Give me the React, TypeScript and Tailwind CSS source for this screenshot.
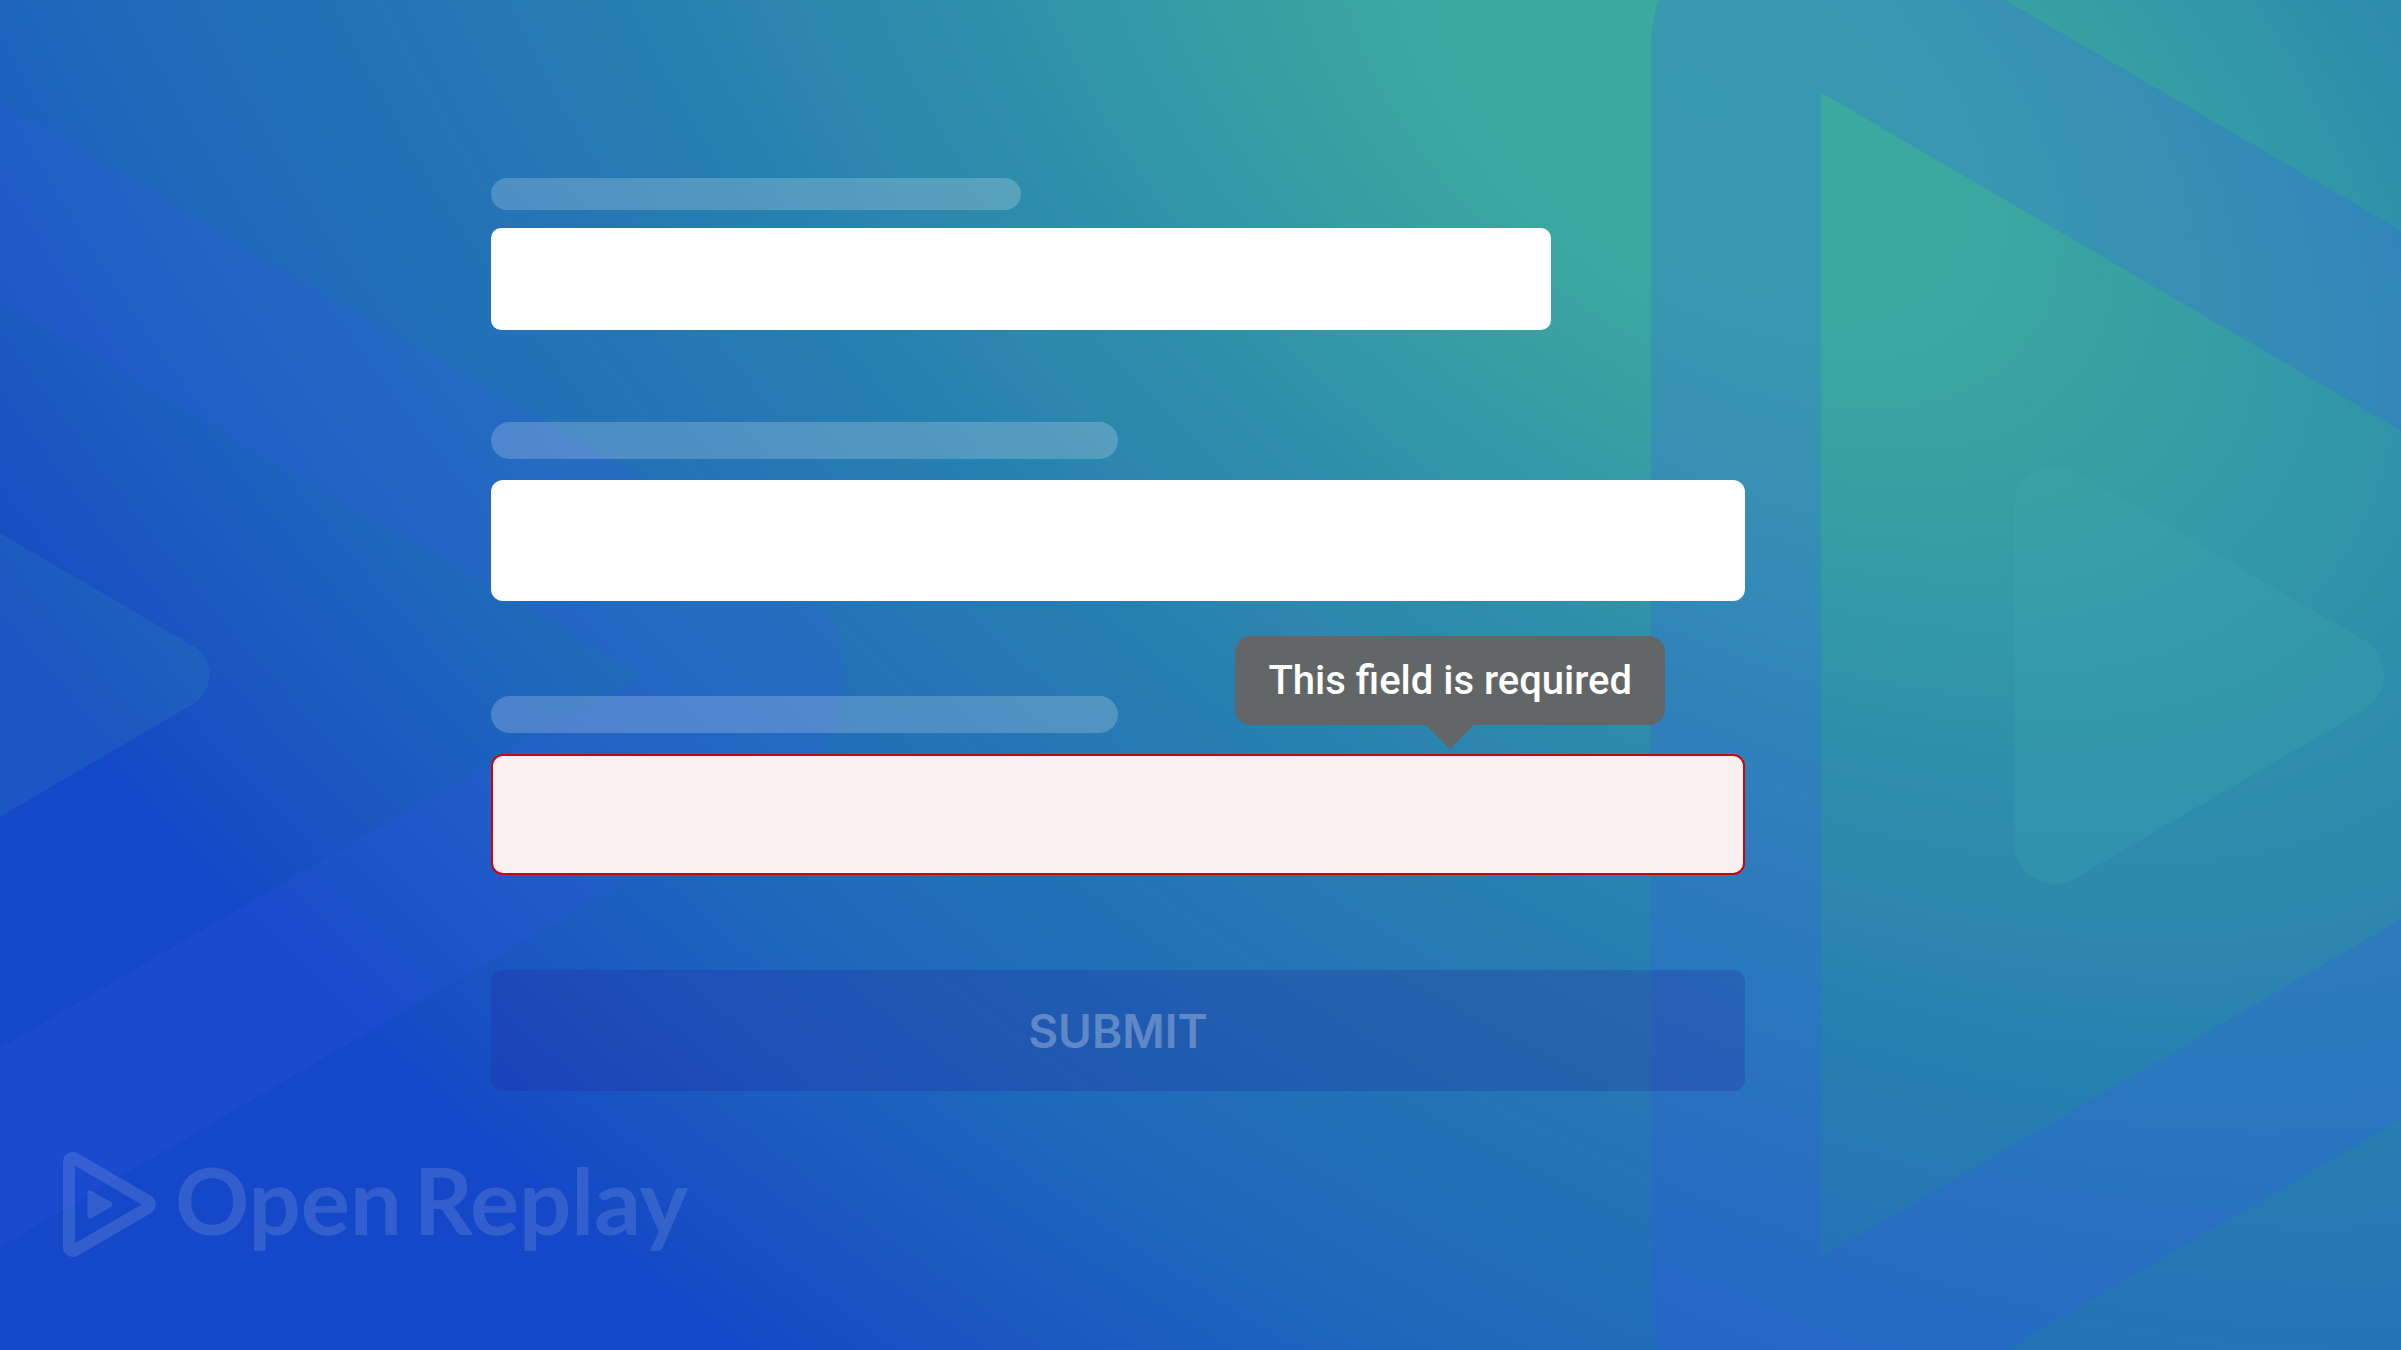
import type { ReactNode } from "react"

// Slope of the play mark's slanted edges.
const SLOPE = 0.583
const ANGLE = Math.atan(SLOPE)

// Right-pointing triangle with rounded corners, from its left edge to its apex.
function playPath(left: number, apex: number, cy: number, r: number) {
  const half = (apex - left) * SLOPE
  const cos = Math.cos(ANGLE)
  const sin = Math.sin(ANGLE)
  const tip = r / Math.tan(ANGLE)
  const side = r / Math.tan((Math.PI / 2 - ANGLE) / 2)
  const arc = `A ${r} ${r} 0 0 1`

  return [
    `M ${left} ${cy - half + side}`,
    `${arc} ${left + side * cos} ${cy - half + side * sin}`,
    `L ${apex - tip * cos} ${cy - tip * sin}`,
    `${arc} ${apex - tip * cos} ${cy + tip * sin}`,
    `L ${left + side * cos} ${cy + half - side * sin}`,
    `${arc} ${left} ${cy + half - side}`,
    "Z",
  ].join(" ")
}

function Backdrop() {
  return (
    <svg
      aria-hidden="true"
      viewBox="0 0 2401 1350"
      preserveAspectRatio="xMidYMid slice"
      className="absolute inset-0 h-full w-full"
    >
      <defs>
        <radialGradient
          id="glow"
          gradientUnits="userSpaceOnUse"
          cx="0"
          cy="0"
          r="1"
          gradientTransform="translate(1700 92) rotate(37) scale(2700 1580)"
        >
          <stop offset="0" stopColor="#3aaa9f" />
          <stop offset="0.12" stopColor="#3aa8a0" />
          <stop offset="0.19" stopColor="#38a0a2" />
          <stop offset="0.26" stopColor="#3399a8" />
          <stop offset="0.325" stopColor="#2f8faa" />
          <stop offset="0.41" stopColor="#2d87ae" />
          <stop offset="0.485" stopColor="#2680b0" />
          <stop offset="0.56" stopColor="#2678b3" />
          <stop offset="0.66" stopColor="#2270b8" />
          <stop offset="0.75" stopColor="#1f69ba" />
          <stop offset="0.84" stopColor="#1c5fc0" />
          <stop offset="0.91" stopColor="#1a56c1" />
          <stop offset="0.96" stopColor="#174ec3" />
          <stop offset="1.02" stopColor="#1548c8" />
        </radialGradient>
      </defs>
      <rect width="2401" height="1350" fill="url(#glow)" />
      <g fillRule="evenodd">
        <path
          fill="#394eff"
          fillOpacity="0.18"
          d={`${playPath(1651, 3163, 675, 145)} ${playPath(1821, 2820, 675, 0)}`}
        />
        <path
          fill="#3557f4"
          fillOpacity="0.16"
          d={`${playPath(-531, 981, 675, 138)} ${playPath(-358, 640, 675, 0)}`}
        />
      </g>
      <g fill="#3eaaaf">
        <path fillOpacity="0.24" d={playPath(2014, 2424, 675, 41)} />
        <path fillOpacity="0.15" d={playPath(-167, 243, 675, 34)} />
      </g>
    </svg>
  )
}

function Logo() {
  return (
    <a
      href="/"
      aria-label="OpenReplay"
      className="flex items-start gap-[19px] self-start text-white opacity-[0.12]"
    >
      <svg width="93" height="106" viewBox="63 1152 93 106" fill="currentColor">
        <path
          fillRule="evenodd"
          d={`${playPath(63, 165.6, 1204.5, 10)} ${playPath(75, 141.6, 1204.5, 0)}`}
        />
        <path d={playPath(87.5, 115, 1204.5, 2.5)} />
      </svg>
      <span className="flex gap-3 font-['Lato',sans-serif] text-[92px] leading-[96px] font-bold">
        <span>Open</span>
        <span>Replay</span>
      </span>
    </a>
  )
}

function Field({
  id,
  name,
  small,
  invalid,
  children,
}: {
  id: string
  name: string
  small?: boolean
  invalid?: boolean
  children?: ReactNode
}) {
  return (
    <div
      className={
        small
          ? "flex w-full max-w-[1060px] flex-col gap-[18px]"
          : "flex w-full max-w-[1254px] flex-col gap-[21px]"
      }
    >
      <label
        htmlFor={id}
        className={
          small
            ? "block h-8 w-1/2 rounded-full bg-white/20"
            : "block h-[37px] w-1/2 rounded-full bg-white/20"
        }
      />
      <div className="relative">
        <input
          id={id}
          type="text"
          aria-label={name}
          aria-invalid={invalid}
          aria-describedby={invalid ? `${id}-error` : undefined}
          className={
            small
              ? "block h-[102px] w-full rounded-[10px] bg-white px-6 text-4xl outline-none"
              : invalid
                ? "block h-[121px] w-full rounded-xl border-2 border-[#cc0508] bg-[#faf0f0] px-6 text-4xl outline-none"
                : "block h-[121px] w-full rounded-xl bg-white px-6 text-4xl outline-none"
          }
        />
        {children}
      </div>
    </div>
  )
}

export default function App() {
  return (
    <div className="relative flex min-h-screen flex-col bg-[#1548c8] font-['Roboto',sans-serif]">
      <Backdrop />

      <main className="relative pt-[178px] pr-16 pl-[491px]">
        <form className="flex flex-col gap-[92px]" onSubmit={(e) => e.preventDefault()}>
          <Field id="first" name="First field" small />
          <div className="flex flex-col gap-[95px]">
            <Field id="second" name="Second field" />
            <Field id="third" name="Third field" invalid>
              <div
                id="third-error"
                role="tooltip"
                className="absolute right-20 bottom-full mb-[29px] rounded-2xl bg-[#626666] px-[33px] py-6 text-[40px] leading-[41px] font-medium whitespace-nowrap text-white"
              >
                This field is required
                <svg
                  aria-hidden="true"
                  width="48"
                  height="24"
                  viewBox="0 0 48 24"
                  className="absolute top-full left-1/2 -translate-x-1/2"
                >
                  <path d="M0 0h48L24 24z" fill="#626666" />
                </svg>
              </div>
            </Field>
            <button
              type="submit"
              className="h-[121px] w-full max-w-[1254px] rounded-xl bg-[#23239b]/25 font-['Inter',sans-serif] text-[46px] leading-[56px] font-semibold text-white/30"
            >
              SUBMIT
            </button>
          </div>
        </form>
      </main>

      <footer className="relative flex px-[63px] pt-[61px] pb-16">
        <Logo />
      </footer>
    </div>
  )
}
